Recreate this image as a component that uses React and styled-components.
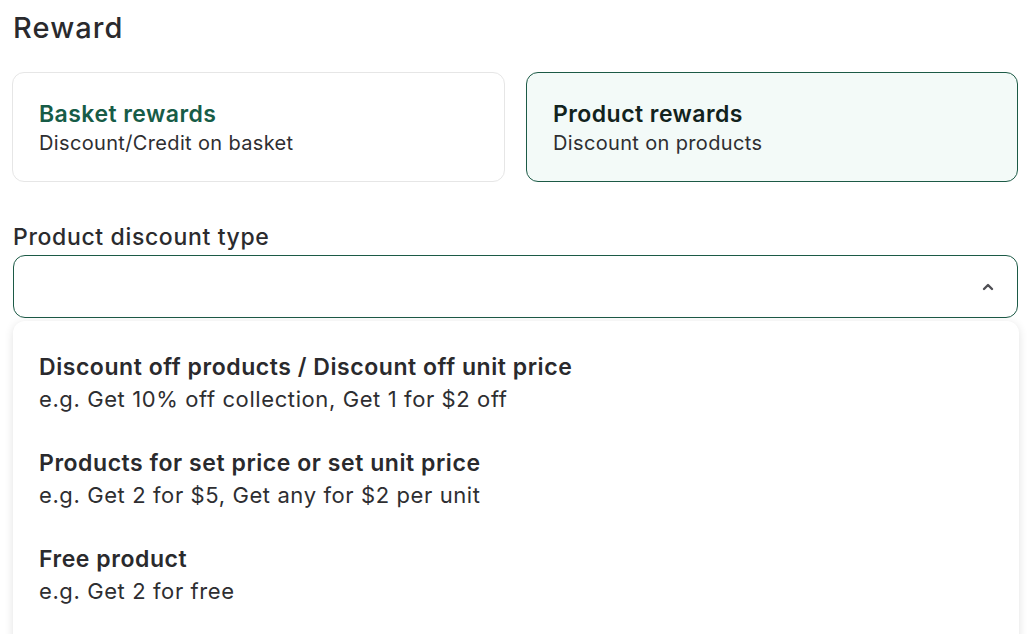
import React from "react";
import styled, { createGlobalStyle } from "styled-components";

const GlobalStyle = createGlobalStyle`
  body {
    margin: 0;
    background: #ffffff;
    font-family: "Inter", "Noto Sans", sans-serif;
    color: #2b2b2e;
  }
`;

const options = [
  {
    title: "Discount off products / Discount off unit price",
    hint: "e.g. Get 10% off collection, Get 1 for $2 off",
  },
  {
    title: "Products for set price or set unit price",
    hint: "e.g. Get 2 for $5, Get any for $2 per unit",
  },
  { title: "Free product", hint: "e.g. Get 2 for free" },
];

const App = () => {
  return (
    <>
      <GlobalStyle />
      <Page>
        <Heading>Reward</Heading>
        <CardRow>
          <RewardCard>
            <CardTitle $accent>Basket rewards</CardTitle>
            <CardText>Discount/Credit on basket</CardText>
          </RewardCard>
          <RewardCard $selected>
            <CardTitle>Product rewards</CardTitle>
            <CardText>Discount on products</CardText>
          </RewardCard>
        </CardRow>

        <Field>
          <Label>Product discount type</Label>
          <SelectWrap>
            <SelectBox>
              <svg width="14" height="14" viewBox="0 0 14 14" fill="none">
                <path
                  d="M3 9l4-4 4 4"
                  stroke="#4f4f54"
                  strokeWidth="2.4"
                  strokeLinecap="round"
                  strokeLinejoin="round"
                />
              </svg>
            </SelectBox>
            <Menu>
              {options.map((o) => (
                <Option key={o.title}>
                  <OptionTitle>{o.title}</OptionTitle>
                  <OptionHint>{o.hint}</OptionHint>
                </Option>
              ))}
            </Menu>
          </SelectWrap>
          <HiddenCard />
        </Field>
      </Page>
    </>
  );
};

const Page = styled.div`
  padding: 8px 14px 0 13px;
  height: 626px;
  overflow: hidden;
`;

const Heading = styled.h1`
  margin: 0 0 24px;
  font-size: 29px;
  font-weight: 500;
  line-height: 40px;
  letter-spacing: 1.1px;
  color: #2a2a2d;
`;

const CardRow = styled.div`
  display: grid;
  grid-template-columns: 1fr 1fr;
  gap: 21px;
`;

const RewardCard = styled.div`
  height: 110px;
  box-sizing: border-box;
  padding: 27px 26px 0;
  border-radius: 12px;
  border: 1px solid ${(p) => (p.$selected ? "#1c5a46" : "#e6e6e6")};
  background: ${(p) => (p.$selected ? "#f3faf8" : "#ffffff")};
  margin-left: ${(p) => (p.$selected ? "0" : "-1px")};
`;

const CardTitle = styled.div`
  font-size: 23px;
  font-weight: 600;
  line-height: 28px;
  letter-spacing: 0.45px;
  color: ${(p) => (p.$accent ? "#175c47" : "#12231d")};
`;

const CardText = styled.div`
  font-size: 20px;
  line-height: 30px;
  letter-spacing: 0.35px;
  color: #2e2e31;
`;

const Field = styled.div`
  margin-top: 40px;
`;

const Label = styled.div`
  font-size: 23px;
  font-weight: 500;
  line-height: 30px;
  letter-spacing: 0.65px;
  margin-bottom: 3px;
  color: #2b2b2e;
`;

const SelectWrap = styled.div`
  position: relative;
  z-index: 2;
`;

const SelectBox = styled.div`
  height: 63px;
  box-sizing: border-box;
  border: 1px solid #1c5a46;
  border-radius: 12px;
  display: flex;
  align-items: center;
  justify-content: flex-end;
  padding-right: 22px;
`;

const Menu = styled.div`
  position: absolute;
  top: 66px;
  left: 0;
  right: -1px;
  padding: 30px 26px 40px;
  background: #ffffff;
  border-radius: 12px;
  box-shadow: 0 2px 10px rgba(0, 0, 0, 0.12);
  display: flex;
  flex-direction: column;
  gap: 32px;
`;

const Option = styled.div`
  display: flex;
  flex-direction: column;
`;

const OptionTitle = styled.div`
  font-size: 23px;
  font-weight: 600;
  line-height: 32px;
  letter-spacing: 0.55px;
  color: #2a2a2d;
`;

const OptionHint = styled.div`
  font-size: 22px;
  line-height: 32px;
  letter-spacing: 0.6px;
  color: #2e2e31;
`;

const HiddenCard = styled.div`
  margin-top: 108px;
  height: 100px;
  border: 1px solid #e6e6e6;
  border-radius: 12px;
`;

export default App;
